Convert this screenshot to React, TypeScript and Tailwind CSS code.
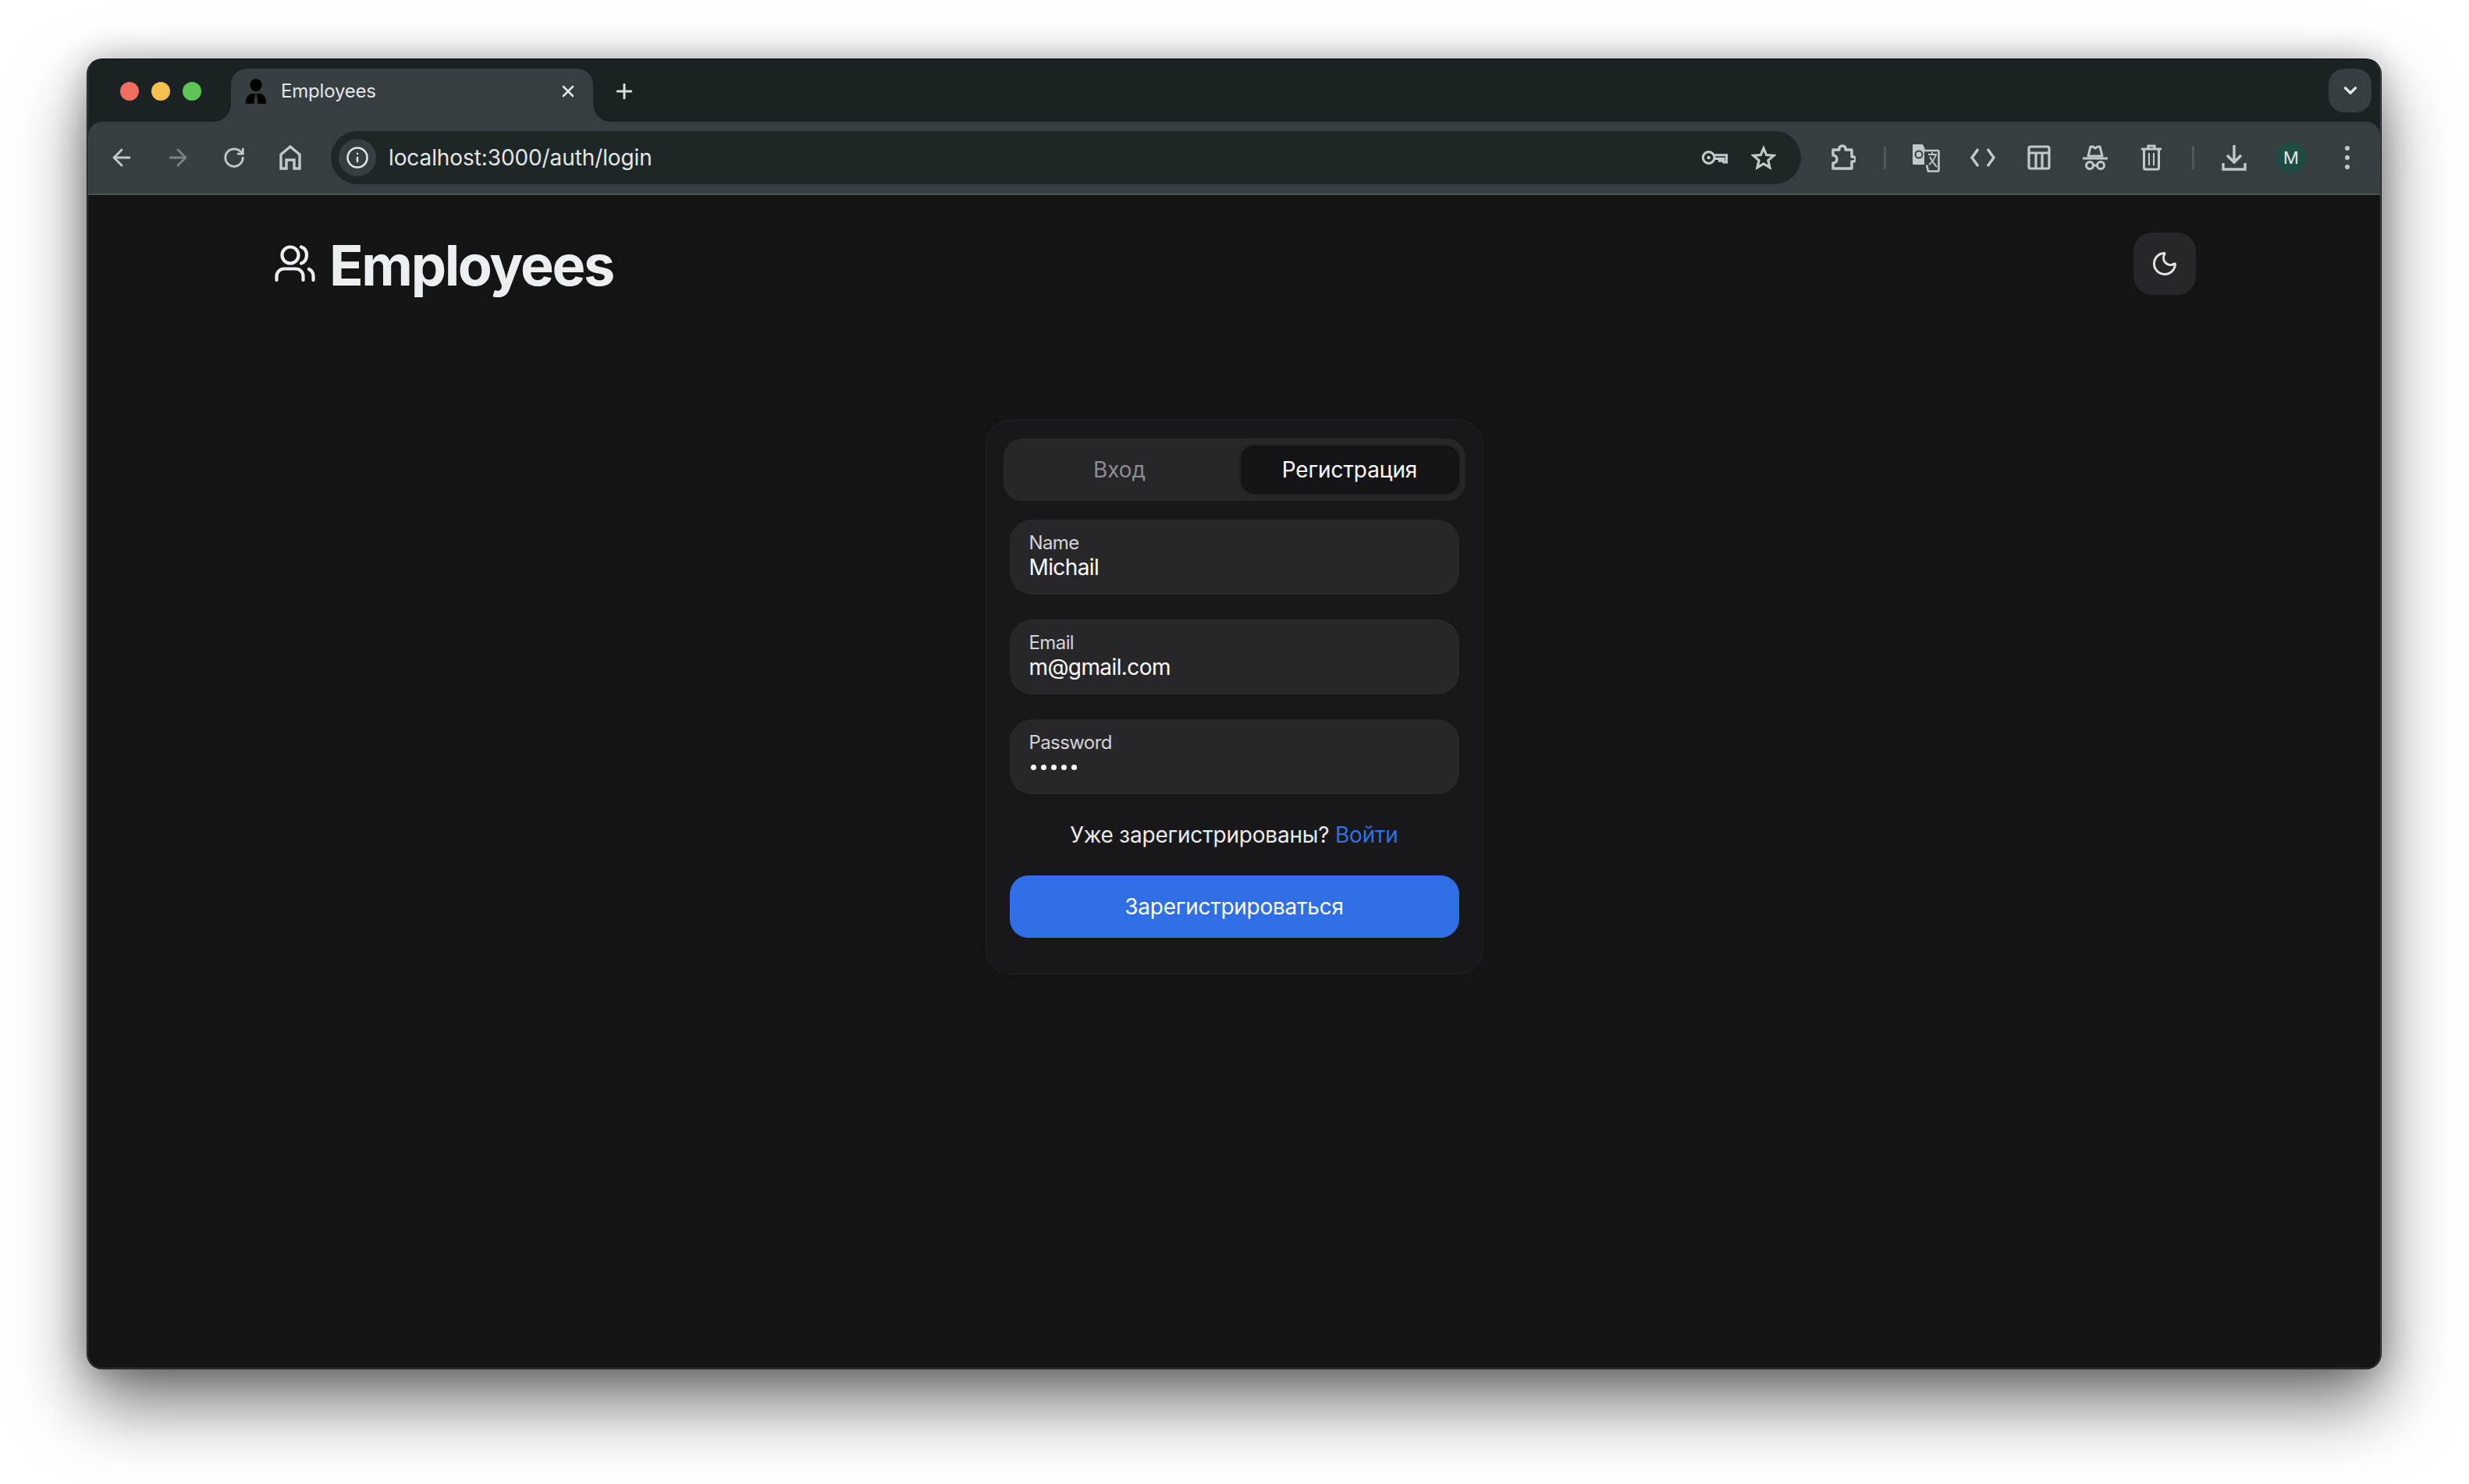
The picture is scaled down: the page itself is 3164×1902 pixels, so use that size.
import React from "react"
import { ArrowLeft, ArrowRight, ChevronDown, Info, Moon, Plus, RotateCw, X } from "lucide-react"

const iconColor = "text-[#c3c8ca]"

function HomeIcon() {
  return (
    <svg width="30" height="34" viewBox="0 0 30 34" fill="none" stroke="currentColor" strokeWidth="3.4" strokeLinejoin="miter">
      <path d="M3 31V13L15 3l12 10v18h-7V20H10v11z" />
    </svg>
  )
}

function KeyIcon() {
  return (
    <svg width="36" height="22" viewBox="0 0 38 24" fill="none" stroke="currentColor" strokeWidth="3.4">
      <circle cx="11" cy="12" r="8" />
      <circle cx="11" cy="12" r="2.5" fill="currentColor" stroke="none" />
      <path d="M19 8.5h17v10h-4v-5h-3v3h-3v-3h-7" />
    </svg>
  )
}

function StarIcon() {
  return (
    <svg width="32" height="32" viewBox="0 0 32 32" fill="none" stroke="currentColor" strokeWidth="3.2" strokeLinejoin="miter">
      <path d="M16 4l3.600 8.600 9.400.8-7.100 6.100 2.100 9.100-8-4.800-8 4.800 2.100-9.100-7.100-6.100 9.400-.8z" />
    </svg>
  )
}

function PuzzleIcon() {
  return (
    <svg width="32" height="34" viewBox="0 0 32 34" fill="none" stroke="currentColor" strokeWidth="3.4" strokeLinejoin="round">
      <path d="M3 7h8V5a4 3 0 0 1 8 0v2h8v9h2a3 3 0 0 1 0 6h-2v9H3v-7a5 5 0 0 0 0-10z" />
    </svg>
  )
}

function TranslateIcon() {
  return (
    <svg width="36" height="38" viewBox="0 0 36 38">
      <path d="M2 2h12l3 6h-1v20H2a1 1 0 0 1-1-1V3a1 1 0 0 1 1-1z" fill="currentColor" />
      <path d="M16 10h17a1.500 1.500 0 0 1 1.500 1.500V35a1.500 1.500 0 0 1-1.500 1.500H21l-2-8" fill="none" stroke="currentColor" strokeWidth="2.600" />
      <path d="M21 15h11M26 12v3M31 15c-2 6-5 10-9 13M23 18c2 4 5 8 9 13" fill="none" stroke="currentColor" strokeWidth="1.800" />
      <circle cx="9" cy="15" r="4.500" fill="none" stroke="#373e41" strokeWidth="2" />
    </svg>
  )
}

function CodeIcon() {
  return (
    <svg width="34" height="28" viewBox="0 0 34 28" fill="none" stroke="currentColor" strokeWidth="3.400">
      <path d="M11 3L3 14l8 11M23 3l8 11-8 11" />
    </svg>
  )
}

function TableIcon() {
  return (
    <svg width="30" height="32" viewBox="0 0 30 32" fill="none" stroke="currentColor" strokeWidth="3.200">
      <rect x="2" y="2" width="26" height="28" rx="2" />
      <path d="M2 10h26M11 10v20M19 10v20" />
    </svg>
  )
}

function IncognitoIcon() {
  return (
    <svg width="32" height="34" viewBox="0 0 32 34" fill="none" stroke="currentColor" strokeWidth="3">
      <path d="M0 18h32" />
      <path d="M7 15l3-12h3l3 2 3-2h3l3 12z" strokeLinejoin="round" />
      <circle cx="9" cy="27" r="4.500" />
      <circle cx="23" cy="27" r="4.500" />
      <path d="M13.500 27h5" />
    </svg>
  )
}

function TrashIcon() {
  return (
    <svg width="26" height="34" viewBox="0 0 26 34" fill="none" stroke="currentColor" strokeWidth="3">
      <path d="M0 6h26M9 6V2h8v4" />
      <path d="M3.500 6v24a2 2 0 0 0 2 2h15a2 2 0 0 0 2-2V6" />
      <path d="M10 11v16M16 11v16" strokeWidth="2" />
    </svg>
  )
}

function DownloadIcon() {
  return (
    <svg width="32" height="34" viewBox="0 0 32 34" fill="none" stroke="currentColor" strokeWidth="3.400">
      <path d="M16 1v22M7 14l9 9 9-9" />
      <path d="M2 24v8h28v-8" />
    </svg>
  )
}

function Favicon() {
  return (
    <svg width="28" height="32" viewBox="0 0 28 32" className="shrink-0">
      <ellipse cx="14" cy="8" rx="7.500" ry="8" fill="#000" />
      <path d="M1 32c0-7 2-12 8-13h10c6 1 8 6 8 13z" fill="#000" />
      <path d="M13 20h2l1.500 12h-5z" fill="#373e41" />
    </svg>
  )
}

function UsersIcon() {
  return (
    <svg width="52" height="48" viewBox="0 0 52 48" fill="none" stroke="#eceef0" strokeWidth="4.200" strokeLinecap="round" className="shrink-0">
      <circle cx="20" cy="13" r="10.500" />
      <path d="M34 2.500c4.500 1.500 7 5.500 7 10.500s-2.500 9-7 10.500" />
      <path d="M2.500 45v-5c0-5.500 4.500-9.500 10-9.500h14c5.500 0 10 4 10 9.500v5" />
      <path d="M44 31c3 1.500 5.500 4.500 5.500 9v5" />
    </svg>
  )
}

function Sep() {
  return <div className="w-[3px] h-[30px] bg-[#50575a] rounded-full" />
}

function Slot({ w, children }: { w: number; children: React.ReactNode }) {
  return (
    <div className={`flex items-center justify-center ${iconColor}`} style={{ width: w }}>
      {children}
    </div>
  )
}

function Field({ label, value, secret }: { label: string; value: string; secret?: boolean }) {
  return (
    <div className="h-24 rounded-[28px] bg-[#27272a] px-[25px] pb-[4px] flex flex-col justify-center tracking-[-0.6px]">
      <div className="text-[24px] leading-[30px] text-[#d4d4d8]">{label}</div>
      {secret ? (
        <div className="flex gap-[6px] h-[32px] items-center pl-[2px]">
          {[0, 1, 2, 3, 4].map((i) => (
            <span key={i} className="w-[7px] h-[7px] rounded-full bg-white" />
          ))}
        </div>
      ) : (
        <div className="text-[28px] leading-[32px] text-white">{value}</div>
      )}
    </div>
  )
}

export default function App() {
  return (
    <div className="w-[3164px] h-[1902px] bg-white pl-[111px] pt-[75px] font-['Inter',sans-serif] overflow-hidden">
      <div className="w-[2941px] h-[1680px] rounded-[20px] bg-[#0c0c0c] p-px shadow-[0_44px_90px_rgba(0,0,0,0.55),0_0_40px_rgba(0,0,0,0.25)]">
        <div className="h-full rounded-[19px] overflow-hidden bg-[#1b2224] border border-[#43484a] border-t-[#1b2224] flex flex-col">
          {/* tab strip */}
          <div className="h-[79px] shrink-0 bg-[#1b2224] flex pt-[11px]">
            <div className="flex items-center gap-4 pl-[41px] w-[183px] h-[58px]">
              <span className="w-6 h-6 rounded-full bg-[#f26d60]" />
              <span className="w-6 h-6 rounded-full bg-[#f6bf4f]" />
              <span className="w-6 h-6 rounded-full bg-[#5ec654]" />
            </div>
            <div className="relative w-[464px] h-[68px] rounded-t-[20px] bg-[#373e41] flex items-center pl-[18px] pr-[20px] pb-[10px] text-[#e3e6e7]">
              <div className="absolute left-[-22px] bottom-0 w-[22px] h-[22px] bg-[radial-gradient(circle_at_0_0,#1b2224_21.5px,#373e41_22px)]" />
              <div className="absolute right-[-22px] bottom-0 w-[22px] h-[22px] bg-[radial-gradient(circle_at_100%_0,#1b2224_21.5px,#373e41_22px)]" />
              <Favicon />
              <span className="ml-[18px] text-[24px] flex-1 tracking-[-0.2px]">Employees</span>
              <X size={24} strokeWidth={2.5} />
            </div>
            <div className="ml-[25px] h-[58px] flex items-center text-[#d8dcdd]">
              <Plus size={30} strokeWidth={2.4} />
            </div>
            <div className="ml-auto mr-[11px] w-[55px] h-14 rounded-[20px] bg-[#373e41] flex items-center justify-center text-[#e3e6e7]">
              <ChevronDown size={26} strokeWidth={3} />
            </div>
          </div>

          {/* toolbar */}
          <div className="h-[94px] shrink-0 bg-[#373e41] rounded-t-[18px] border-b-[2px] border-[#4a4f51] flex items-center">
            <div className="flex items-center pl-[7px]">
              <Slot w={72}><ArrowLeft size={34} strokeWidth={2} /></Slot>
              <div className="w-[72px] flex justify-center text-[#7b8285]"><ArrowRight size={34} strokeWidth={2} /></div>
              <Slot w={72}><RotateCw size={30} strokeWidth={2.2} /></Slot>
              <Slot w={72}><HomeIcon /></Slot>
            </div>
            <div className="ml-[16px] w-[1884px] h-[68px] rounded-full bg-[#1f2628] flex items-center pl-[10px] pr-[32px]">
              <div className="w-12 h-12 rounded-full bg-[#373e41] flex items-center justify-center text-[#e3e6e7]">
                <Info size={30} strokeWidth={2} />
              </div>
              <span className="ml-[16px] text-[28px] text-[#e3e6e7] flex-1 tracking-[-0.1px]">localhost:3000/auth/login</span>
              <Slot w={36}><KeyIcon /></Slot>
              <div className={`ml-[29px] ${iconColor}`}><StarIcon /></div>
            </div>
            <div className="flex items-center ml-[36px]">
              <Slot w={36}><PuzzleIcon /></Slot>
              <div className="w-[70px] flex justify-center"><Sep /></div>
              <Slot w={36}><TranslateIcon /></Slot>
              <div className="w-[37px]" />
              <Slot w={36}><CodeIcon /></Slot>
              <div className="w-[36px]" />
              <Slot w={36}><TableIcon /></Slot>
              <div className="w-[36px]" />
              <Slot w={36}><IncognitoIcon /></Slot>
              <div className="w-[36px]" />
              <Slot w={36}><TrashIcon /></Slot>
              <div className="w-[70px] flex justify-center"><Sep /></div>
              <Slot w={36}><DownloadIcon /></Slot>
              <div className="ml-[36px] w-[38px] h-10 rounded-full bg-[#1c4c42] flex items-center justify-center text-[#e3e6e7] text-[22px]">M</div>
              <div className="ml-[50px] flex flex-col gap-[6px]">
                <span className="w-[6px] h-[6px] rounded-full bg-[#c3c8ca]" />
                <span className="w-[6px] h-[6px] rounded-full bg-[#c3c8ca]" />
                <span className="w-[6px] h-[6px] rounded-full bg-[#c3c8ca]" />
              </div>
            </div>
          </div>

          {/* page */}
          <div className="flex-1 bg-[#141414] pt-12">
            <header className="w-[2462px] ml-[239px] flex items-start justify-between">
              <div className="flex items-center gap-[18px] h-[80px]">
                <UsersIcon />
                <h1 className="mt-[3px] text-[72px] leading-none font-bold tracking-[-0.033em] text-[#eceef0]">Employees</h1>
              </div>
              <button className="w-20 h-20 rounded-[24px] bg-[#27272a] flex items-center justify-center text-[#e4e4e7]">
                <Moon size={36} strokeWidth={2} />
              </button>
            </header>

            <div className="mt-[160px] mx-auto w-[638px] h-[711px] rounded-[32px] bg-[#18181a] border border-[#222224] px-[22px] pt-[23px]">
              <div className="h-20 rounded-[24px] bg-[#27272a] flex items-center px-2 text-[28px] tracking-[-0.1px]">
                <div className="w-[296px] pr-[14px] text-center text-[#8b8b93]">Вход</div>
                <div className="flex-1 h-[62px] rounded-[18px] bg-[#141416] flex items-center justify-center text-white shadow-[0_0_4px_rgba(0,0,0,0.3)]">Регистрация</div>
              </div>
              <div className="mt-6 px-2 flex flex-col gap-8">
                <Field label="Name" value="Michail" />
                <Field label="Email" value="m@gmail.com" />
                <Field label="Password" value="" secret />
              </div>
              <p className="mt-[32px] h-[40px] leading-[40px] text-center text-[28px] text-[#ececee] tracking-[-0.2px]">
                Уже зарегистрированы? <span className="text-[#306fe6]">Войти</span>
              </p>
              <div className="px-2 mt-[32px]">
                <button className="w-full h-20 rounded-[24px] bg-[#306ee6] text-white text-[28px] tracking-[-0.25px]">Зарегистрироваться</button>
              </div>
            </div>
          </div>
        </div>
      </div>
    </div>
  )
}
